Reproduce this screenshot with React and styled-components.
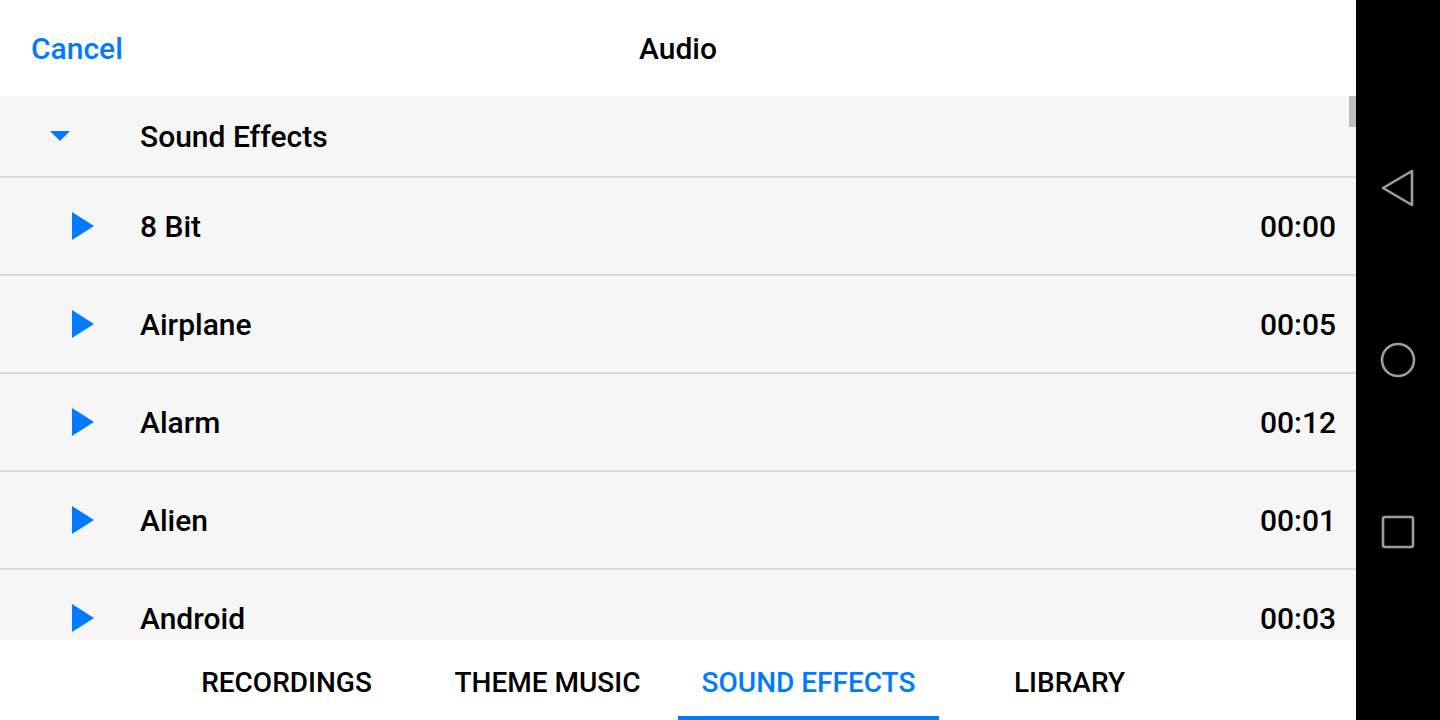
import React from 'react';
import styled, { createGlobalStyle } from 'styled-components';

const GlobalStyle = createGlobalStyle`
  html, body {
    margin: 0;
    padding: 0;
    width: 1440px;
    height: 720px;
    overflow: hidden;
    background: #000;
    font-family: 'Roboto', 'Liberation Sans', sans-serif;
  }
`;

const BLUE = '#007AFF';

const Screen = styled.div`
  display: flex;
  width: 1440px;
  height: 720px;
`;

const Main = styled.div`
  flex: 1;
  display: flex;
  flex-direction: column;
  background: #fff;
  min-width: 0;
`;

const Header = styled.div`
  height: 96px;
  flex-shrink: 0;
  display: grid;
  grid-template-columns: 1fr auto 1fr;
  align-items: center;
  padding: 0 31px;
  font-size: 30px;
  font-weight: 500;
`;

const CancelBtn = styled.a`
  color: ${BLUE};
  justify-self: start;
  cursor: pointer;
`;

const Title = styled.div`
  color: #000;
`;

const List = styled.div`
  flex: 1;
  background: #f6f6f6;
  overflow: hidden;
  position: relative;
`;

const ScrollThumb = styled.div`
  position: absolute;
  right: 0;
  top: 0;
  width: 7px;
  height: 31px;
  background: #bdbdbd;
`;

const SectionHeader = styled.div`
  height: 80px;
  display: flex;
  align-items: center;
  border-bottom: 2px solid #d9d9d9;
  font-size: 30px;
  font-weight: 500;
  color: #000;
`;

const CaretBox = styled.div`
  width: 140px;
  display: flex;
  justify-content: flex-start;
  padding-left: 50px;
  box-sizing: border-box;
`;

const Row = styled.div`
  height: 96px;
  display: flex;
  align-items: center;
  border-bottom: 2px solid #d9d9d9;
  font-size: 30px;
  font-weight: 500;
  color: #000;
  padding-right: 20px;
`;

const PlayBox = styled.div`
  width: 140px;
  padding-left: 72px;
  box-sizing: border-box;
  display: flex;
  align-items: center;
`;

const Name = styled.div`
  flex: 1;
`;

const Time = styled.div`
  font-variant-numeric: tabular-nums;
`;

const Tabs = styled.div`
  height: 80px;
  flex-shrink: 0;
  display: flex;
  justify-content: center;
  background: #fff;
`;

const Tab = styled.div`
  width: 261px;
  display: flex;
  align-items: center;
  justify-content: center;
  padding-top: 8px;
  font-size: 28px;
  font-weight: 500;
  text-transform: uppercase;
  color: ${({ $active }) => ($active ? BLUE : '#000')};
  border-bottom: 4px solid ${({ $active }) => ($active ? BLUE : 'transparent')};
  box-sizing: border-box;
`;

const NavBar = styled.div`
  width: 84px;
  flex-shrink: 0;
  background: #000;
  display: flex;
  flex-direction: column;
  align-items: center;
  justify-content: center;
  gap: 132px;
`;

const NavIcon = styled.svg`
  width: 40px;
  height: 40px;
  stroke: #9e9e9e;
  stroke-width: 2.6;
  fill: none;
  stroke-linejoin: round;
`;

const Caret = () => (
  <svg width="20" height="10" viewBox="0 0 20 10">
    <polygon points="0,0 20,0 10,10" fill={BLUE} />
  </svg>
);

const Play = () => (
  <svg width="22" height="28" viewBox="0 0 22 28">
    <polygon points="0,0 22,14 0,28" fill={BLUE} />
  </svg>
);

const sounds = [
  { name: '8 Bit', time: '00:00' },
  { name: 'Airplane', time: '00:05' },
  { name: 'Alarm', time: '00:12' },
  { name: 'Alien', time: '00:01' },
  { name: 'Android', time: '00:03' },
];

const tabs = ['Recordings', 'Theme Music', 'Sound Effects', 'Library'];

export default function App() {
  return (
    <>
      <GlobalStyle />
      <Screen>
        <Main>
          <Header>
            <CancelBtn>Cancel</CancelBtn>
            <Title>Audio</Title>
            <span />
          </Header>
          <List>
            <ScrollThumb />
            <SectionHeader>
              <CaretBox><Caret /></CaretBox>
              Sound Effects
            </SectionHeader>
            {sounds.map((s) => (
              <Row key={s.name}>
                <PlayBox><Play /></PlayBox>
                <Name>{s.name}</Name>
                <Time>{s.time}</Time>
              </Row>
            ))}
          </List>
          <Tabs>
            {tabs.map((t) => (
              <Tab key={t} $active={t === 'Sound Effects'}>{t}</Tab>
            ))}
          </Tabs>
        </Main>
        <NavBar>
          <NavIcon viewBox="0 0 40 40">
            <path d="M34 3 L34 37 L5 20 Z" />
          </NavIcon>
          <NavIcon viewBox="0 0 40 40">
            <circle cx="20" cy="20" r="16" />
          </NavIcon>
          <NavIcon viewBox="0 0 40 40">
            <rect x="5" y="5" width="30" height="30" rx="2" />
          </NavIcon>
        </NavBar>
      </Screen>
    </>
  );
}
